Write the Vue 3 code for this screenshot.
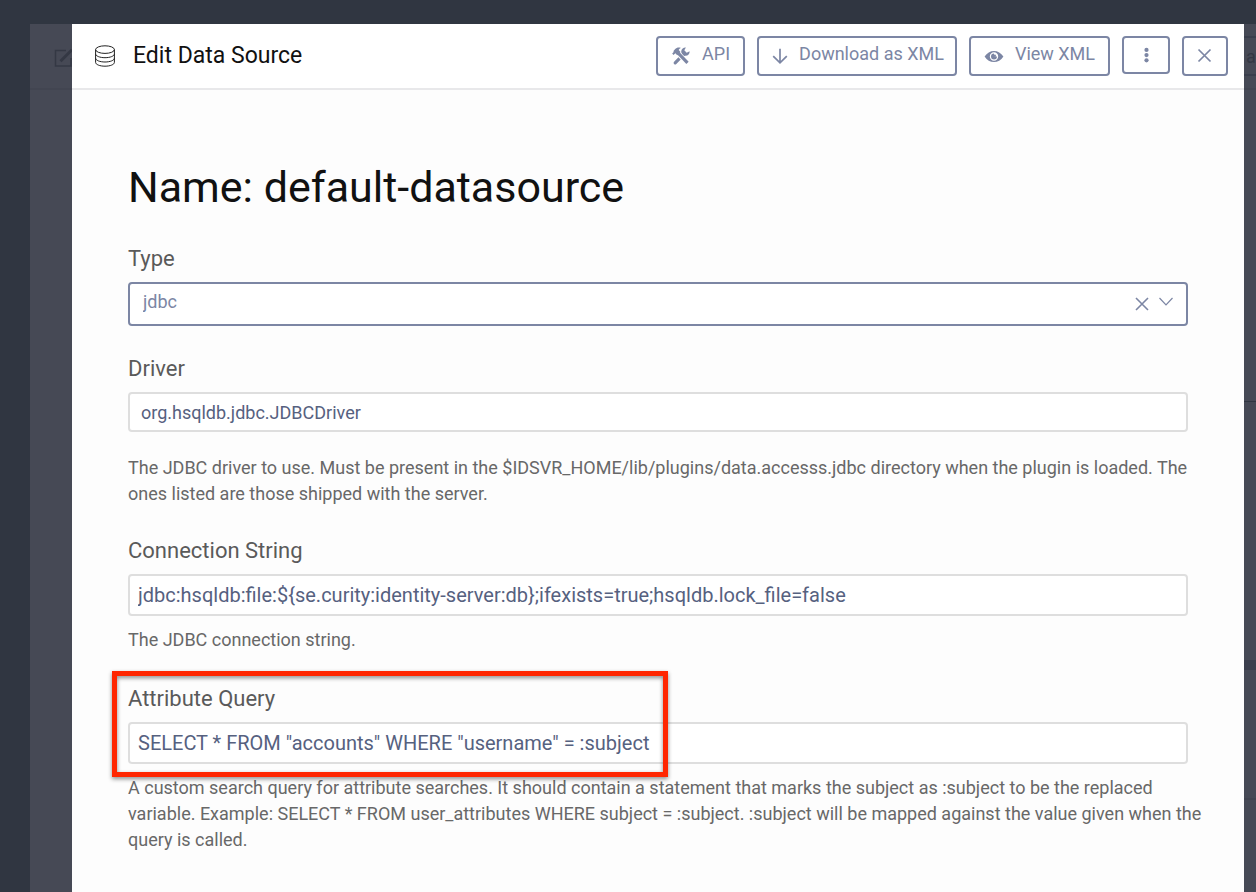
<script setup>
import { ref } from 'vue'

const type = ref('jdbc')
const driver = ref('org.hsqldb.jdbc.JDBCDriver')
const connection = ref('jdbc:hsqldb:file:${se.curity:identity-server:db};ifexists=true;hsqldb.lock_file=false')
const query = ref('SELECT * FROM "accounts" WHERE "username" = :subject')
</script>

<template>
  <div class="page">
    <div class="backdrop">
      <aside class="strip strip-left" aria-hidden="true">
        <div class="strip-head">
          <svg class="edit-icon" width="22" height="20" viewBox="0 0 22 20" fill="none" stroke="currentColor">
            <path d="M12 2.5H1.500V18H17V10" stroke-width="1.500" />
            <path d="M6.500 13.200L18 1.700" stroke-width="3" />
          </svg>
        </div>
      </aside>

      <main class="modal" role="dialog" aria-labelledby="dialog-title">
        <header class="modal-head">
          <svg class="db-icon" width="22" height="22" viewBox="0 0 22 22" fill="none" stroke="currentColor" stroke-width="1">
            <ellipse cx="11" cy="4.600" rx="9.400" ry="3.800" />
            <path d="M1.600 4.600V17.400C1.600 19.500 5.800 21.200 11 21.200S20.400 19.500 20.400 17.400V4.600" />
            <path d="M1.600 8.900C1.600 11 5.800 12.700 11 12.700S20.400 11 20.400 8.900" />
            <path d="M1.600 13.200C1.600 15.300 5.800 17 11 17S20.400 15.300 20.400 13.200" />
          </svg>
          <h2 id="dialog-title">Edit Data Source</h2>
          <div class="actions">
            <button type="button" class="btn">
              <svg width="20" height="20" viewBox="0 0 20 20" fill="none" stroke="currentColor">
                <path d="M4.200 16.800L12.800 8.200" stroke-width="3.200" stroke-linecap="round" />
                <path d="M18.600 5.200A4.200 4.200 0 1 1 14.900 1.500L13.300 4.200L15.700 6.700Z" fill="currentColor" stroke="none" />
                <path d="M8.500 8.800L16.400 17" stroke="#fff" stroke-width="5" />
                <path d="M7.200 7.200L16.500 16.800" stroke-width="3.200" />
                <path d="M1.200 7.600L2.400 8.900L4.400 7.200L6.200 9.200L9.500 6L7.700 4.100C8.200 2.900 8.900 2.400 10 2C7.600 1.200 5.500 1.700 4 3.200L2.500 4.900L2.700 6.100Z" fill="currentColor" stroke="none" />
              </svg>
              <span>API</span>
            </button>
            <button type="button" class="btn download">
              <svg width="20" height="20" viewBox="0 0 20 20" fill="none" stroke="currentColor" stroke-width="1.700">
                <path d="M10 2.800V16.800M3.200 10.100L10 16.900L16.800 10.100" />
              </svg>
              <span>Download as XML</span>
            </button>
            <button type="button" class="btn">
              <svg width="20" height="20" viewBox="0 0 20 20" fill="none" stroke="currentColor">
                <path fill-rule="evenodd" d="M.6 10.500C3 6.800 6.200 4.900 10 4.900S17 6.800 19.400 10.500C17 14.200 13.800 16.100 10 16.100S3 14.200 .6 10.500ZM10 6.300A4.200 4.200 0 1 0 10 14.700A4.200 4.200 0 1 0 10 6.300Z" fill="currentColor" stroke="none" />
                <path fill-rule="evenodd" d="M10 7.500A3 3 0 1 0 13 10.500H10Z" fill="currentColor" stroke="none" />
                <circle cx="10.800" cy="9.700" r="1.200" fill="currentColor" stroke="none" />
              </svg>
              <span>View XML</span>
            </button>
            <button type="button" class="btn more" aria-label="More actions">
              <svg width="20" height="20" viewBox="0 0 20 20" fill="currentColor">
                <circle cx="10.500" cy="4.900" r="2.100" />
                <circle cx="10.500" cy="10.100" r="2.100" />
                <circle cx="10.500" cy="15.300" r="2.100" />
              </svg>
            </button>
            <button type="button" class="btn close" aria-label="Close">
              <svg width="20" height="20" viewBox="0 0 20 20" fill="none" stroke="currentColor" stroke-width="1.700">
                <path d="M3.500 3.500L15.500 15.500M15.500 3.500L3.500 15.500" />
              </svg>
            </button>
          </div>
        </header>

        <form class="form" @submit.prevent>
          <h1>Name: default-datasource</h1>

          <div class="field">
            <label for="type">Type</label>
            <div class="select-box">
              <select id="type" v-model="type">
                <option value="jdbc">jdbc</option>
              </select>
              <button type="button" class="clear" aria-label="Clear type">
                <svg width="14" height="14" viewBox="0 0 14 14" fill="none" stroke="currentColor" stroke-width="1.600">
                  <path d="M1 1L13 13M13 1L1 13" />
                </svg>
              </button>
              <svg class="chevron" width="16" height="10" viewBox="0 0 16 10" fill="none" stroke="currentColor" stroke-width="1.200">
                <path d="M1.500 1L8 7.800L14.500 1" />
              </svg>
            </div>
          </div>

          <div class="field">
            <label for="driver">Driver</label>
            <input id="driver" v-model="driver" class="compact" type="text" spellcheck="false" aria-describedby="driver-help" />
            <p id="driver-help" class="help spaced">
              The JDBC driver to use. Must be present in the $IDSVR_HOME/lib/plugins/data.accesss.jdbc directory when the plugin is loaded. The ones listed are those shipped with the server.
            </p>
          </div>

          <div class="field">
            <label for="connection">Connection String</label>
            <input id="connection" v-model="connection" type="text" spellcheck="false" aria-describedby="connection-help" />
            <p id="connection-help" class="help">The JDBC connection string.</p>
          </div>

          <div class="field">
            <div class="marked">
              <label for="query">Attribute Query</label>
              <input id="query" v-model="query" type="text" spellcheck="false" aria-describedby="query-help" />
              <span class="marker" aria-hidden="true"></span>
            </div>
            <p id="query-help" class="help">
              A custom search query for attribute searches. It should contain a statement that marks the subject as :subject to be the replaced variable. Example: SELECT * FROM user_attributes WHERE subject = :subject. :subject will be mapped against the value given when the query is called.
            </p>
          </div>
        </form>
      </main>

      <aside class="strip strip-right" aria-hidden="true">
        <div class="strip-head"><span class="ghost">a</span></div>
        <div class="block tall"></div>
        <div class="block mid"></div>
        <div class="block low"></div>
      </aside>
    </div>
  </div>
</template>

<style>
body {
  margin: 0;
  background: #303641;
}
</style>

<style scoped>
* {
  box-sizing: border-box;
}

.page {
  height: 100vh;
  overflow: hidden;
  padding: 24px 0 0 30px;
  background: #303641;
  font-family: Roboto, "Liberation Sans", sans-serif;
}

.backdrop {
  display: flex;
  min-height: 100%;
  background: #464955;
}

.strip {
  flex: none;
  overflow: hidden;
  color: #343844;
}

.strip-left {
  width: 42px;
}

.strip-right {
  width: 12px;
}

.strip-head {
  height: 66px;
  border-bottom: 2px solid #424551;
}

.strip-left .strip-head {
  padding: 24px 0 0 24px;
}

.strip-right .strip-head {
  padding-top: 12px;
}

.edit-icon {
  display: block;
}

.ghost {
  display: block;
  width: 60px;
  height: 40px;
  padding-left: 2px;
  border: solid #3a3e4c;
  border-width: 2px 0;
  font-size: 18px;
  line-height: 38px;
}

.block.tall {
  height: 312px;
  border-bottom: 1px solid #303641;
}

.block.mid {
  height: 268px;
  border-bottom: 10px solid #3a3e4c;
}

.block.low {
  height: 130px;
  border-bottom: 2px solid #414450;
}

.modal {
  flex: 1;
  min-width: 0;
  background: #fdfdfd;
}

.modal-head {
  display: flex;
  align-items: center;
  padding: 12px 16px 12px 22px;
  border-bottom: 2px solid #e8e8ea;
  background: #fff;
}

.db-icon {
  flex: none;
  color: #222;
}

h2 {
  margin: 0 0 0 17px;
  color: #111;
  font-size: 23px;
  font-weight: 400;
  line-height: 32px;
}

.actions {
  display: flex;
  align-items: flex-start;
  gap: 12px;
  margin-left: auto;
}

.btn {
  display: flex;
  align-items: center;
  justify-content: center;
  gap: 11px;
  height: 40px;
  padding: 0 13px;
  border: 2px solid #7c86a4;
  border-radius: 4px;
  background: #fff;
  color: #7c86a4;
  font: 400 18px/22px Roboto, "Liberation Sans", sans-serif;
}

.btn span {
  padding-bottom: 4px;
}

.btn.download {
  gap: 9px;
  padding: 0 11px;
}

.btn.more {
  width: 48px;
  height: 38px;
  padding: 0;
}

.btn.close {
  width: 46px;
  padding: 0;
}

.form {
  padding: 68px 56px 40px;
}

h1 {
  margin: 0 0 26px;
  color: #111;
  font-size: 43px;
  font-weight: 400;
  line-height: 58px;
}

.field {
  margin-bottom: 29px;
}

label {
  display: block;
  width: fit-content;
  margin-bottom: 6px;
  color: #5a5a5a;
  font-size: 22px;
  line-height: 34px;
}

input {
  display: block;
  width: 100%;
  height: 42px;
  padding: 0 8px;
  border: 2px solid #dedede;
  border-radius: 4px;
  outline: none;
  background: #fff;
  color: #56617f;
  font: 400 20px/24px Roboto, "Liberation Sans", sans-serif;
}

input.compact {
  height: 40px;
  padding: 0 11px;
  font-size: 18px;
}

.select-box {
  display: flex;
  align-items: center;
  height: 44px;
  margin-bottom: -3px;
  padding: 0 12px 0 13px;
  border: 2px solid #7c86a4;
  border-radius: 4px;
  background: #fff;
  color: #7c86a4;
}

select {
  flex: 1;
  min-width: 0;
  height: 36px;
  padding: 0 0 4px;
  border: 0;
  outline: none;
  appearance: none;
  background: transparent;
  color: #7c86a4;
  font: 400 18px/24px Roboto, "Liberation Sans", sans-serif;
}

.clear {
  display: flex;
  margin-right: 9px;
  padding: 0;
  border: 0;
  background: transparent;
  color: inherit;
}

.chevron {
  flex: none;
  margin-bottom: 4px;
}

/* Help text may run slightly past the inputs' right edge. */
.help {
  margin: 11px -16px 0 0;
  color: #686868;
  font-size: 18px;
  line-height: 26px;
}

.help.spaced {
  margin-top: 23px;
  margin-bottom: -2px;
}

.marked {
  position: relative;
}

.marker {
  position: absolute;
  top: -11px;
  bottom: -13px;
  left: -16px;
  width: 556px;
  border: 5px solid #ff2600;
  filter: drop-shadow(0 2px 2px rgba(0, 0, 0, 0.45));
  pointer-events: none;
}
</style>
